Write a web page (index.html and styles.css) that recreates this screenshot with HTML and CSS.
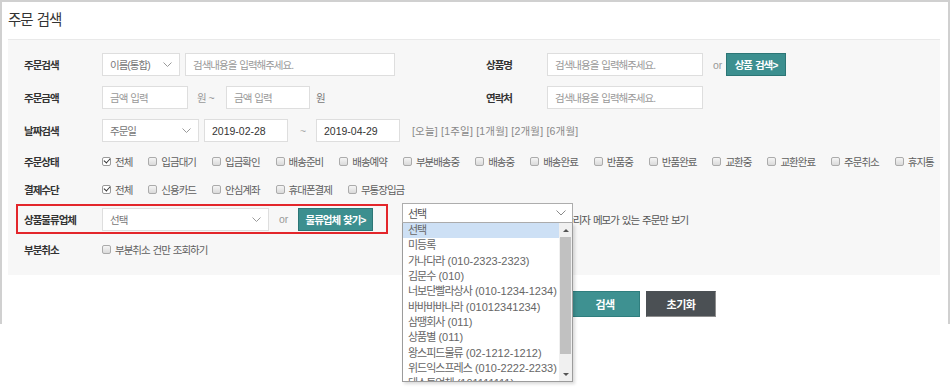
FILE: index.html
```html
<!DOCTYPE html>
<html lang="ko">
<head>
<meta charset="utf-8">
<title>주문 검색</title>
<link rel="stylesheet" href="styles.css">
</head>
<body>
<div class="page">
<div class="win">
  <h1 class="title">주문 검색</h1>
  <div class="panel">
    <div class="row">
      <div class="col-l">
        <span class="lbl">주문검색</span>
        <div class="sel w-name"><span>이름(통합)</span><svg class="chev" width="9" height="5" viewBox="0 0 9 5"><polyline points="0.5,0.5 4.5,4.5 8.5,0.5" fill="none" stroke="#9a9a9a" stroke-width="1"/></svg></div>
        <div class="inp w-kw ph">검색내용을 입력해주세요.</div>
      </div>
      <div class="col-r">
        <span class="lbl lbl-r">상품명</span>
        <div class="inp w-r ph">검색내용을 입력해주세요.</div>
        <span class="or or-1">or</span>
        <button class="btn-teal w-pd">상품 검색&gt;</button>
      </div>
    </div>
    <div class="row">
      <div class="col-l">
        <span class="lbl">주문금액</span>
        <div class="inp w-amt ph">금액 입력</div>
        <span class="unit unit-1">원 ~</span>
        <div class="inp w-amt2 ph">금액 입력</div>
        <span class="unit unit-2">원</span>
      </div>
      <div class="col-r">
        <span class="lbl lbl-r">연락처</span>
        <div class="inp w-r ph">검색내용을 입력해주세요.</div>
      </div>
    </div>
    <div class="row">
      <span class="lbl">날짜검색</span>
      <div class="sel w-date"><span>주문일</span><svg class="chev" width="9" height="5" viewBox="0 0 9 5"><polyline points="0.5,0.5 4.5,4.5 8.5,0.5" fill="none" stroke="#9a9a9a" stroke-width="1"/></svg></div>
      <div class="inp w-d1 date">2019-02-28</div>
      <span class="tilde">~</span>
      <div class="inp w-d2 date">2019-04-29</div>
      <span class="quick">[오늘] [1주일] [1개월] [2개월] [6개월]</span>
    </div>
    <div class="row row-cb">
      <span class="lbl">주문상태</span>
      <div class="cbs">
        <label class="cb"><i class="box on"></i>전체</label>
        <label class="cb"><i class="box"></i>입금대기</label>
        <label class="cb"><i class="box"></i>입금확인</label>
        <label class="cb"><i class="box"></i>배송준비</label>
        <label class="cb"><i class="box"></i>배송예약</label>
        <label class="cb"><i class="box"></i>부분배송중</label>
        <label class="cb"><i class="box"></i>배송중</label>
        <label class="cb"><i class="box"></i>배송완료</label>
        <label class="cb"><i class="box"></i>반품중</label>
        <label class="cb"><i class="box"></i>반품완료</label>
        <label class="cb"><i class="box"></i>교환중</label>
        <label class="cb"><i class="box"></i>교환완료</label>
        <label class="cb"><i class="box"></i>주문취소</label>
        <label class="cb"><i class="box"></i>휴지통</label>
      </div>
    </div>
    <div class="row row-cb">
      <span class="lbl">결제수단</span>
      <div class="cbs">
        <label class="cb"><i class="box on"></i>전체</label>
        <label class="cb"><i class="box"></i>신용카드</label>
        <label class="cb"><i class="box"></i>안심계좌</label>
        <label class="cb"><i class="box"></i>휴대폰결제</label>
        <label class="cb"><i class="box"></i>무통장입금</label>
      </div>
    </div>
    <div class="row row-hl">
      <div class="hl">
        <span class="lbl">상품물류업체</span>
        <div class="sel w-lg"><span>선택</span><svg class="chev" width="9" height="5" viewBox="0 0 9 5"><polyline points="0.5,0.5 4.5,4.5 8.5,0.5" fill="none" stroke="#9a9a9a" stroke-width="1"/></svg></div>
        <span class="or or-2">or</span>
        <button class="btn-teal w-lgbtn">물류업체 찾기&gt;</button>
      </div>
      <label class="cb cb-memo"><i class="box"></i>관리자 메모가 있는 주문만 보기</label>
    </div>
    <div class="row row-cb">
      <span class="lbl">부분취소</span>
      <label class="cb"><i class="box"></i>부분취소 건만 조회하기</label>
    </div>
  </div>
  <div class="actions">
    <button class="btn btn-go">검색</button>
    <button class="btn btn-reset">초기화</button>
  </div>

  <div class="dd">
    <div class="dd-head"><span>선택</span><svg class="chev" width="10" height="6" viewBox="0 0 10 6"><polyline points="0.5,0.5 5,5 9.5,0.5" fill="none" stroke="#8a8a8a" stroke-width="1"/></svg></div>
    <div class="dd-list">
      <ul class="dd-items">
        <li class="cur">선택</li>
        <li>미등록</li>
        <li>가나다라 <span class="tel">(010-2323-2323)</span></li>
        <li>김문수 <span class="tel">(010)</span></li>
        <li>너보단빨라상사 <span class="tel">(010-1234-1234)</span></li>
        <li>바바바바나라 <span class="tel">(01012341234)</span></li>
        <li>삼땡회사 <span class="tel">(011)</span></li>
        <li>상품별 <span class="tel">(011)</span></li>
        <li>왕스피드물류 <span class="tel">(02-1212-1212)</span></li>
        <li>위드익스프레스 <span class="tel">(010-2222-2233)</span></li>
        <li>테스트업체 <span class="tel">(101111111)</span></li>
      </ul>
      <div class="sb">
        <span class="sb-up"></span>
        <span class="sb-thumb"></span>
        <span class="sb-fill"></span>
        <span class="sb-down"></span>
      </div>
    </div>
  </div>
</div>
</div>
</body>
</html>
```
FILE: styles.css
```css
* { box-sizing: border-box; }
html, body { min-height: 391px; }
body {
  margin: 0;
  background: #fff;
  font-family: "Liberation Sans", "Noto Sans CJK KR", sans-serif;
  font-size: 10.5px;
  letter-spacing: -1px;
  word-spacing: 1px;
  color: #666;
}
button { font-family: inherit; letter-spacing: inherit; word-spacing: inherit; cursor: pointer; padding: 0; }

.page { height: 391px; }
.win {
  position: relative;
  width: 950px;
  height: 324px;
  border: 2px solid #d0d0d0;
  border-bottom: 0;
  background: #fff;
}
.title {
  margin: 0;
  padding-left: 6px;
  height: 37px;
  line-height: 37px;
  font-size: 14.5px;
  font-weight: normal;
  color: #333;
  letter-spacing: -1px;
}
.panel {
  margin-left: 6px;
  width: 932px;
  background: #f7f7f7;
  border-top: 1px solid #e9e9e9;
  padding: 8px 0 12px 16px;
}
.row { display: flex; align-items: center; height: 33px; }
.row-cb { height: 28px; }
.row-hl { height: 32px; }
.col-l { display: flex; align-items: center; width: 462px; }
.col-r { display: flex; align-items: center; }

.lbl { width: 78px; flex: none; font-weight: bold; color: #333; }
.lbl-r { width: 61px; }

.inp, .sel {
  flex: none;
  height: 23px;
  display: flex;
  align-items: center;
  padding: 0 7px;
  background: #fff;
  border: 1px solid #dedede;
  color: #333;
  white-space: nowrap;
}
.ph { color: #999; }
.sel { justify-content: space-between; color: #777; padding-right: 7px; }
.chev { display: block; flex: none; }

.w-name { width: 78px; }
.w-kw { width: 210px; margin-left: 5px; }
.w-r { width: 156px; }
.w-amt { width: 86px; }
.w-amt2 { width: 84px; }
.w-date { width: 97px; }
.w-d1 { width: 84px; margin-left: 5px; }
.w-d2 { width: 84px; }
.w-lg { width: 167px; height: 23px; }
.date { letter-spacing: 0; }

.or { color: #999; letter-spacing: 0; }
.or-1 { width: 23px; padding-left: 10px; }
.or-2 { width: 29px; padding-left: 10px; }
.unit { color: #999; }
.unit-1 { width: 38px; padding-left: 9px; }
.unit-2 { padding-left: 6px; color: #777; }
.tilde { width: 28px; padding-left: 12px; color: #aaa; letter-spacing: 0; }
.quick { margin-left: 12px; color: #888; font-size: 10.5px; letter-spacing: 0.2px; word-spacing: 0; }

.btn-teal {
  flex: none;
  height: 23px;
  background: #3c8f8f;
  border: 1px solid #2c7676;
  color: #fff;
  font-size: 10.5px;
  font-weight: bold;
}
.w-pd { width: 60px; }
.w-lgbtn { width: 75px; }

.cbs { display: flex; align-items: center; }
.cb { display: flex; align-items: center; margin-right: 16px; color: #5f5f5f; white-space: nowrap; }
.box {
  position: relative;
  flex: none;
  width: 9px;
  height: 9px;
  margin-right: 4px;
  border: 1px solid #ababab;
  border-radius: 2px;
  background: linear-gradient(#f5f5f5, #dadada);
}
.box.on { background: #fff; border-color: #9a9a9a; }
.box.on::after {
  content: "";
  position: absolute;
  left: 1px;
  top: 0px;
  width: 5px;
  height: 3px;
  border-left: 1.6px solid #333;
  border-bottom: 1.6px solid #333;
  transform: rotate(-48deg);
}

.hl {
  display: flex;
  align-items: center;
  width: 372px;
  height: 30px;
  margin-left: -8px;
  padding-left: 6px;
  border: 2px solid #e3262b;
}
.cb-memo { margin-left: 163px; color: #555; }

.actions { display: flex; gap: 6px; padding-left: 568px; margin-top: 16px; }
.btn {
  width: 70px;
  height: 26px;
  color: #fff;
  font-weight: bold;
  font-size: 11px;
  letter-spacing: -0.5px;
  border: 1px solid;
}
.btn-go { background: #3e9191; border-color: #2f7e7e; }
.btn-reset { background: #4b5054; border-color: #4b5054 #8e8e8e #8e8e8e #4b5054; }

.dd { position: absolute; z-index: 5; left: 400px; top: 201px; width: 171px; }
.dd-head {
  height: 20px;
  display: flex;
  align-items: center;
  justify-content: space-between;
  padding: 0 6px 0 5px;
  background: #fff;
  border: 1px solid #adadad;
  color: #555;
  font-size: 11px;
}
.dd-list {
  display: flex;
  height: 159px;
  background: #fff;
  border: 1px solid #9c9c9c;
  border-top: 0;
  overflow: hidden;
  box-shadow: 2px 2px 3px rgba(0, 0, 0, 0.15);
}
.dd-items { flex: 1; margin: 0; padding: 0; list-style: none; }
.dd-items li {
  height: 15.35px;
  line-height: 15.35px;
  padding-left: 5px;
  font-size: 11px;
  color: #666;
  white-space: nowrap;
}
.dd-items li.cur { background: #cde0f5; }
.tel { letter-spacing: 0; }
.sb { display: flex; flex-direction: column; width: 13px; background: #f0f0f0; }
.sb-up, .sb-down { display: flex; align-items: center; justify-content: center; height: 14px; }
.sb-up::before {
  content: "";
  border-left: 3px solid transparent;
  border-right: 3px solid transparent;
  border-bottom: 3px solid #555;
}
.sb-down::before {
  content: "";
  border-left: 3px solid transparent;
  border-right: 3px solid transparent;
  border-top: 3px solid #555;
}
.sb-thumb { height: 117px; margin: 0 1px; background: #c1c1c1; }
.sb-fill { flex: 1; }
```
